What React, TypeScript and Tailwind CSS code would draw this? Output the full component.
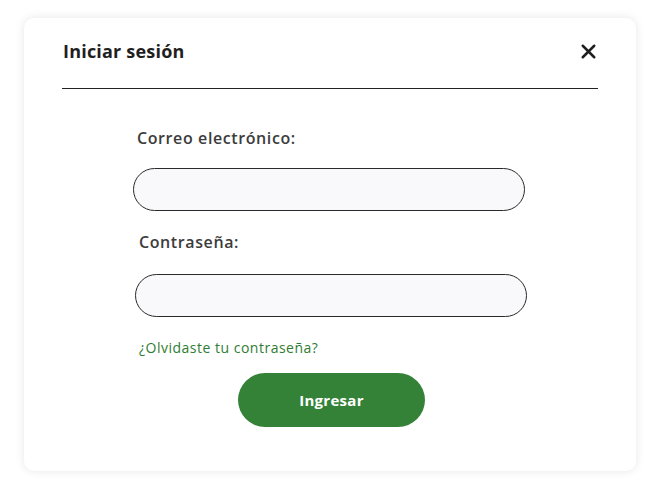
import { X } from 'lucide-react';

export default function App() {
  return (
    <div className="min-h-screen bg-white pt-[18px] pl-[24px]" style={{ fontFamily: '"Open Sans", "Noto Sans", sans-serif' }}>
      <div className="w-[612px] h-[453px] bg-white rounded-[10px] shadow-[0_0_10px_rgba(0,0,0,0.10)]">
        {/* header */}
        <div className="mx-[38px] pt-[21px] pb-[24px] border-b border-[#222] flex items-center justify-between">
          <h1 className="text-[18px] leading-[25px] font-bold tracking-[0.2px] text-[#1f1f1f] pl-[1px]">Iniciar sesión</h1>
          <button className="text-[#1f1f1f] -mr-[2px]">
            <X className="w-[23px] h-[23px]" strokeWidth={2.6} />
          </button>
        </div>

        {/* form */}
        <div className="pl-[109px] pt-[39px]">
          <label className="block pl-[4px] text-[16px] leading-[21px] font-semibold tracking-[0.6px] text-[#3c3c3c]">
            Correo electrónico:
          </label>
          <input
            type="email"
            className="mt-[19px] block w-[392px] h-[43px] rounded-full border border-[#2a2a2a] bg-[#f9f9fb] px-5 outline-none"
          />

          <label className="block mt-[21px] pl-[6px] text-[16px] leading-[21px] font-semibold tracking-[0.6px] text-[#3c3c3c]">
            Contraseña:
          </label>
          <input
            type="password"
            className="mt-[21px] ml-[2px] block w-[392px] h-[43px] rounded-full border border-[#2a2a2a] bg-[#f9f9fb] px-5 outline-none"
          />

          <a href="#" className="block mt-[22px] pl-[6px] text-[14px] leading-[18px] tracking-[0.5px] text-[#2e7d32]">
            ¿Olvidaste tu contraseña?
          </a>

          <button className="mt-[16px] ml-[105px] w-[187px] h-[54px] rounded-full bg-[#338237] text-white text-[15px] font-bold tracking-[0.3px]">
            Ingresar
          </button>
        </div>
      </div>
    </div>
  );
}
